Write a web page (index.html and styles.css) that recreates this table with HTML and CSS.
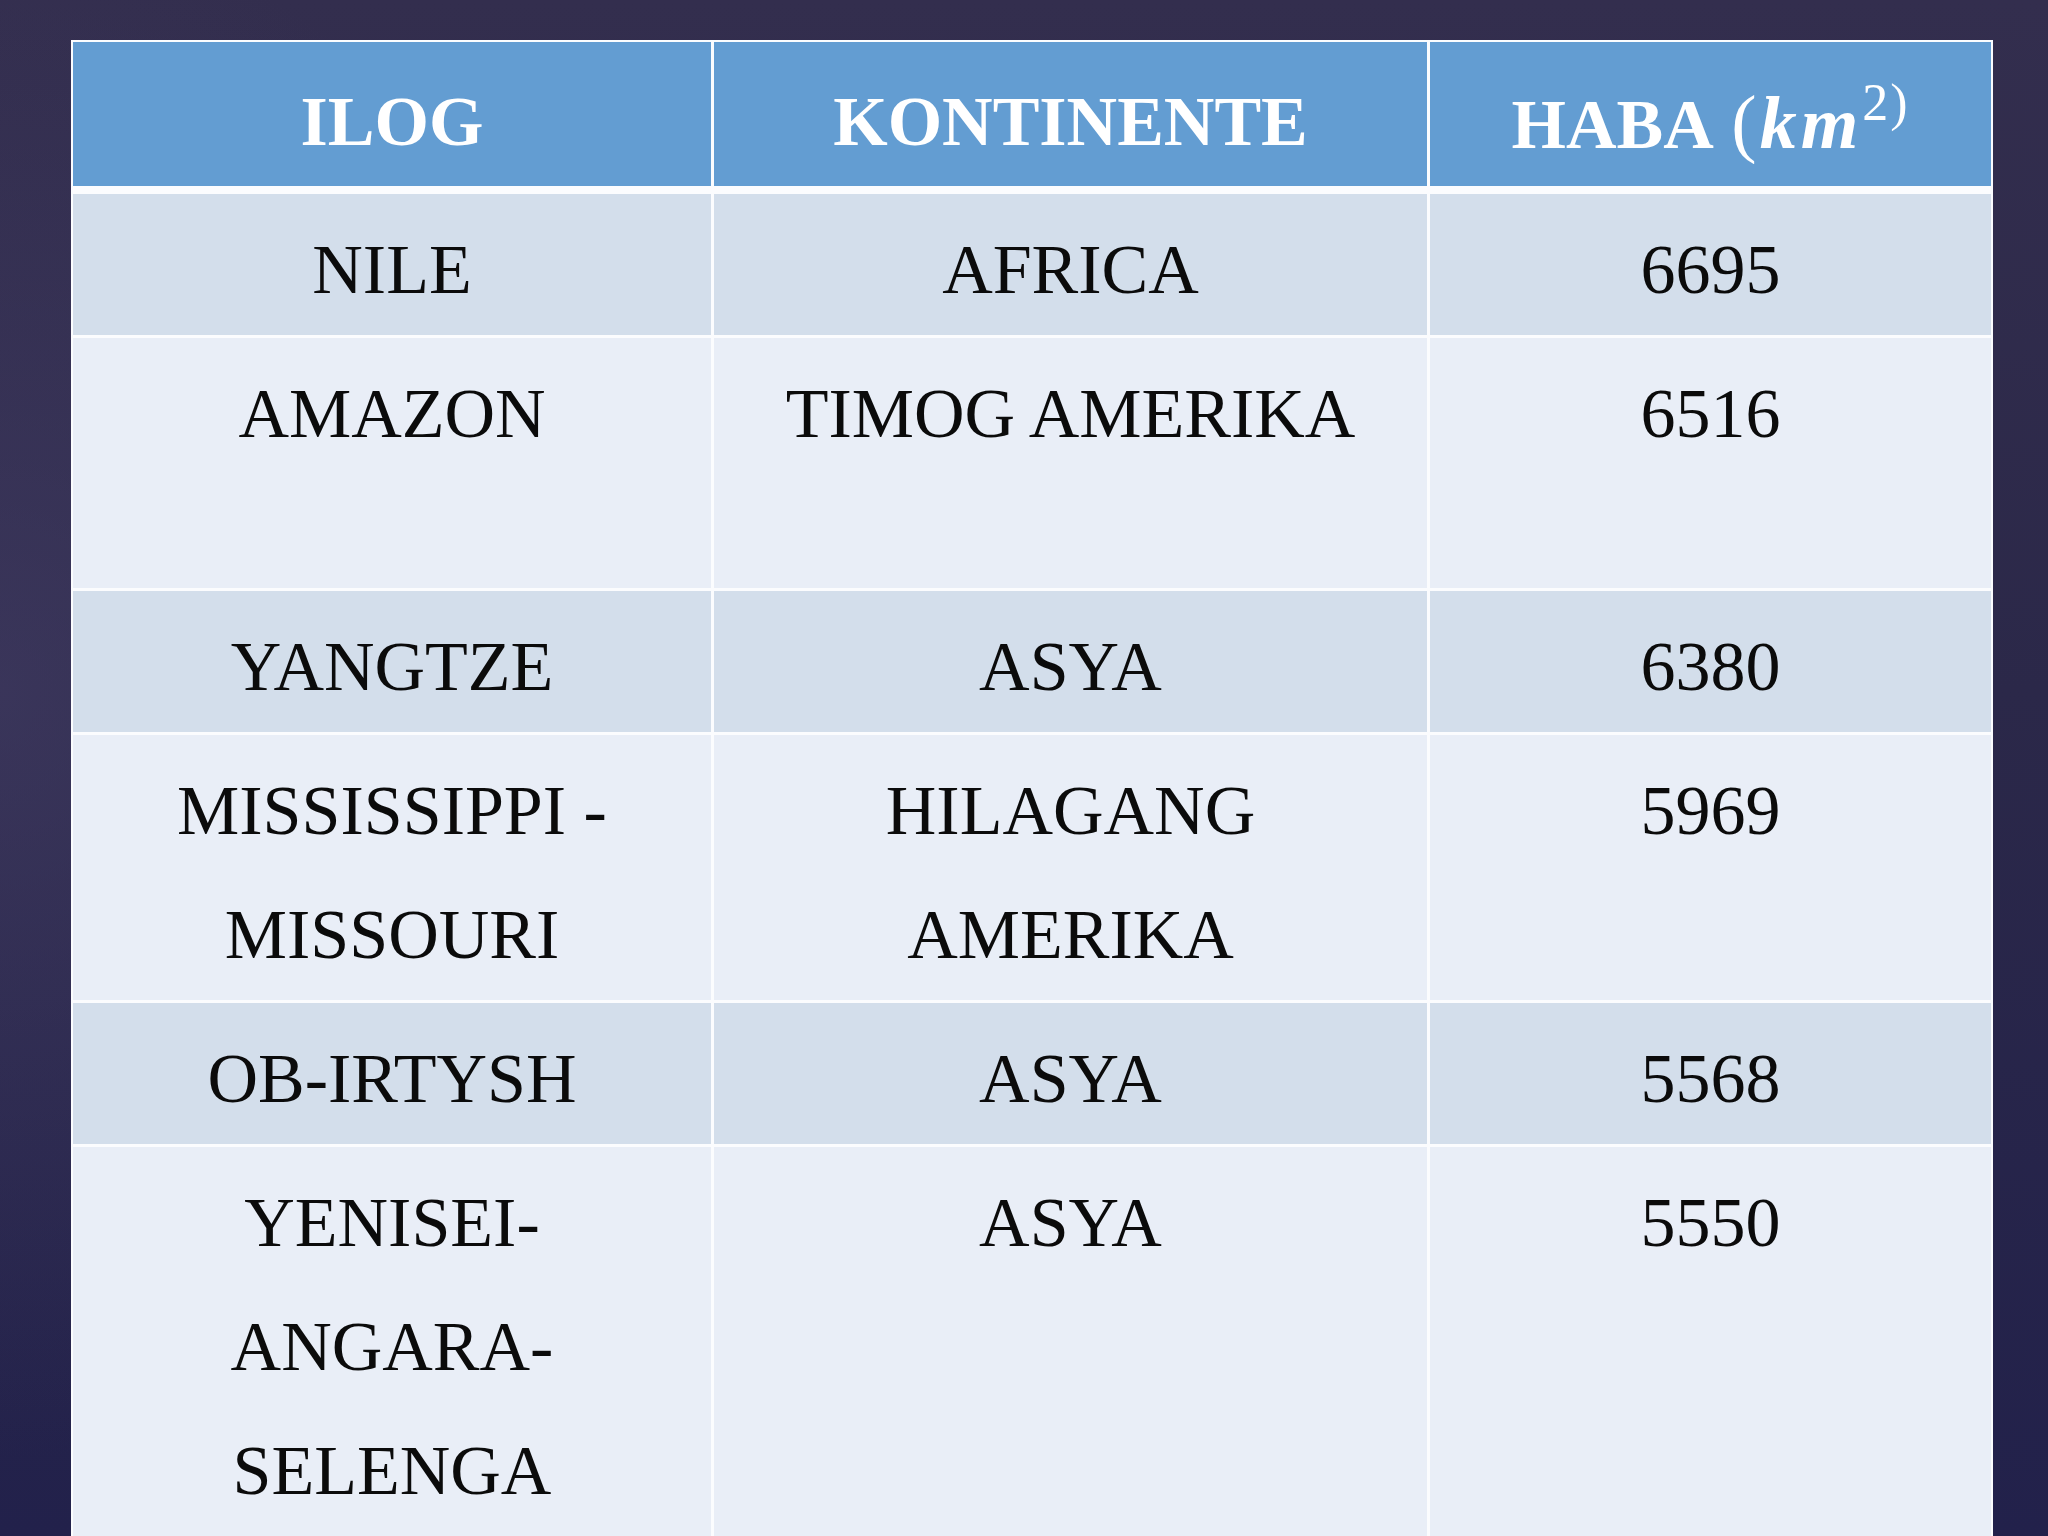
FILE: index.html
```html
<!DOCTYPE html>
<html lang="tl">
<head>
<meta charset="utf-8">
<title>Mga Ilog</title>
<link rel="stylesheet" href="styles.css">
</head>
<body>
<main class="slide">
  <div class="river-table">
    <div class="cell head">ILOG</div>
    <div class="cell head">KONTINENTE</div>
    <div class="cell head">HABA <span class="paren">(</span><i class="math">km</i><sup class="exp">2)</sup></div>

    <div class="cell band">NILE</div>
    <div class="cell band">AFRICA</div>
    <div class="cell band">6695</div>

    <div class="cell pale tall">AMAZON</div>
    <div class="cell pale tall">TIMOG AMERIKA</div>
    <div class="cell pale tall">6516</div>

    <div class="cell band">YANGTZE</div>
    <div class="cell band">ASYA</div>
    <div class="cell band">6380</div>

    <div class="cell pale">MISSISSIPPI -<br>MISSOURI</div>
    <div class="cell pale">HILAGANG<br>AMERIKA</div>
    <div class="cell pale">5969</div>

    <div class="cell band">OB-IRTYSH</div>
    <div class="cell band">ASYA</div>
    <div class="cell band">5568</div>

    <div class="cell pale">YENISEI-<br>ANGARA-<br>SELENGA</div>
    <div class="cell pale">ASYA</div>
    <div class="cell pale">5550</div>
  </div>
</main>
</body>
</html>
```
FILE: styles.css
```css
html, body {
  margin: 0;
  padding: 0;
}

body {
  width: 2048px;
  height: 1536px;
  overflow: hidden;
  background:
    radial-gradient(ellipse 900px 1100px at 0% 45%, rgba(70, 64, 104, 0.55), rgba(70, 64, 104, 0) 70%),
    linear-gradient(180deg, #332e4e 0%, #2b2849 45%, #22214b 100%);
  font-family: "Liberation Serif", "DejaVu Serif", serif;
}

.slide {
  padding: 40px 0 0 71px;
}

.river-table {
  width: 1922px;
  box-sizing: border-box;
  display: grid;
  grid-template-columns: 638px 713px 561px;
  column-gap: 3px;
  row-gap: 3px;
  padding: 2px;
  background: #fbfcfe;
}

.cell {
  font-size: 70px;
  line-height: 124px;
  text-align: center;
  color: #0b0b0b;
  padding: 14px 0 3px;
  white-space: nowrap;
}

.head {
  background: #639dd2;
  color: #ffffff;
  font-weight: bold;
  padding: 18px 0 2px;
  height: 124px;
  margin-bottom: 5px;
}

.band {
  background: #d3deeb;
}

.pale {
  background: #e9eef7;
}

.tall {
  min-height: 233px;
}

.paren {
  font-weight: normal;
  font-size: 76px;
  margin-left: 4px;
  margin-right: 3px;
}

.math {
  font-style: italic;
  font-weight: bold;
  font-size: 74px;
  letter-spacing: 4px;
}

.exp {
  font-size: 52px;
  font-weight: normal;
  line-height: 0;
  vertical-align: 28px;
  letter-spacing: 2px;
}
```
